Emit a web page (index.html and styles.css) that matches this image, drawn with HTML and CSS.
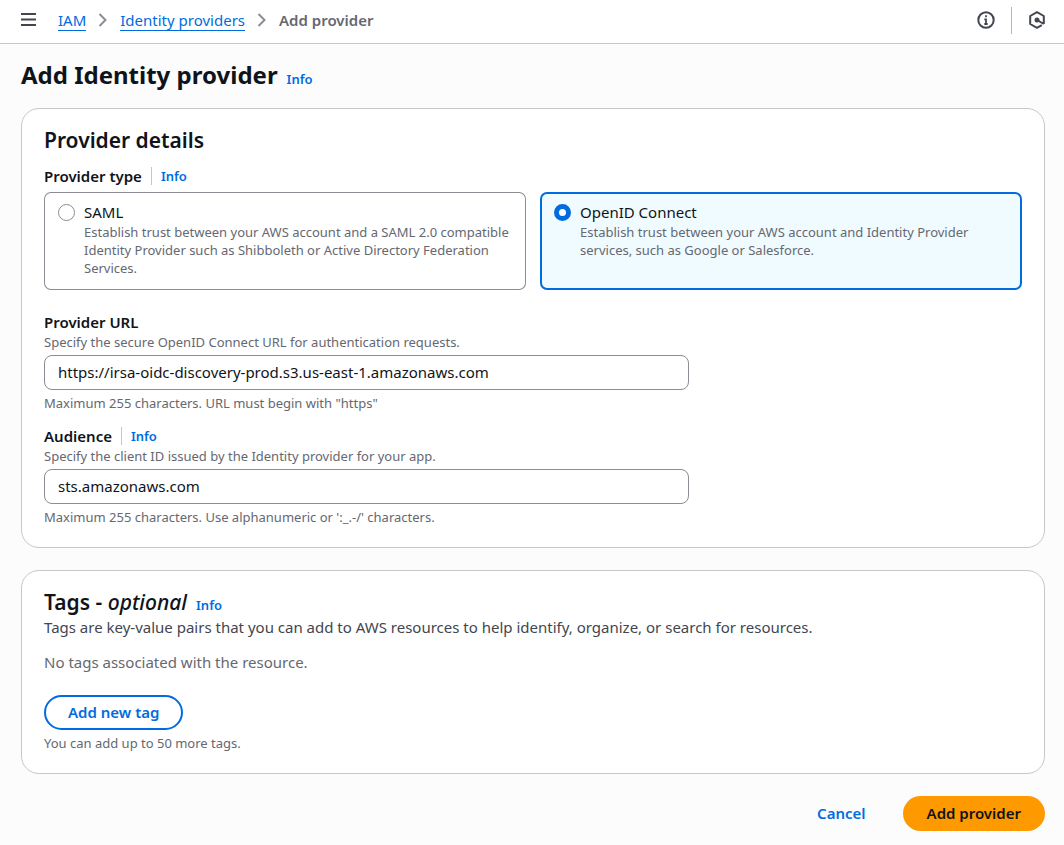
FILE: index.html
```html
<!DOCTYPE html>
<html lang="en">

<head>
    <meta charset="UTF-8">
    <meta name="viewport" content="width=device-width, initial-scale=1.0">
    <title>Add Identity provider | IAM</title>
    <link rel="stylesheet" href="styles.css">
</head>

<body>

    <header class="topbar">
        <button class="icon-button" type="button" aria-label="Open navigation">
            <svg width="18" height="18" viewBox="0 0 18 18" fill="none" stroke="#424650" stroke-width="2">
                <path d="M1 3h15M1 8.500h15M1 14h15" />
            </svg>
        </button>
        <nav class="breadcrumbs" aria-label="Breadcrumbs">
            <a class="breadcrumbs__link" href="#">IAM</a>
            <svg class="breadcrumbs__sep" width="10" height="16" viewBox="0 0 10 16" fill="none" stroke="#8c8c94" stroke-width="2">
                <path d="M1.500 2l6 6-6 6" />
            </svg>
            <a class="breadcrumbs__link" href="#">Identity providers</a>
            <svg class="breadcrumbs__sep" width="10" height="16" viewBox="0 0 10 16" fill="none" stroke="#8c8c94" stroke-width="2">
                <path d="M1.500 2l6 6-6 6" />
            </svg>
            <span class="breadcrumbs__current">Add provider</span>
        </nav>
        <div class="topbar__tools">
            <button class="icon-button" type="button" aria-label="Open help panel">
                <svg width="18" height="18" viewBox="0 0 18 18" fill="none" stroke="#424650" stroke-width="2">
                    <circle cx="9" cy="9" r="7.700" />
                    <path d="M9 4.300v2M7.300 8.300H9V13M7.300 13h3.400" stroke-width="1.800" />
                </svg>
            </button>
            <span class="topbar__divider"></span>
            <button class="icon-button" type="button" aria-label="Open tools">
                <svg width="18" height="18" viewBox="0 0 18 18" fill="none" stroke="#424650" stroke-width="2">
                    <path d="M15.800 13V5L9 1.200 2.200 5v8L9 16.800l4.800-2.700M9 9l6.800 4" stroke-linejoin="round" />
                    <circle cx="9" cy="9" r="2.500" fill="#424650" stroke="none" />
                </svg>
            </button>
        </div>
    </header>

    <main class="content">
        <div class="heading">
            <h1>Add Identity provider</h1>
            <a class="info" href="#">Info</a>
        </div>

        <form class="form">
            <section class="card">
                <h2>Provider details</h2>

                <div class="field-label field-label--first">
                    <span class="label" id="provider-type">Provider type</span>
                    <a class="info info--divided" href="#">Info</a>
                </div>
                <div class="tiles" role="radiogroup" aria-labelledby="provider-type">
                    <label class="tile">
                        <input class="tile__radio" type="radio" name="provider-type" value="saml">
                        <span class="tile__text">
                            <span class="tile__title">SAML</span>
                            <span class="hint">Establish trust between your AWS account and a SAML 2.0 compatible Identity Provider such as Shibboleth or Active Directory Federation Services.</span>
                        </span>
                    </label>
                    <label class="tile tile--selected">
                        <input class="tile__radio" type="radio" name="provider-type" value="oidc" checked>
                        <span class="tile__text">
                            <span class="tile__title">OpenID Connect</span>
                            <span class="hint">Establish trust between your AWS account and Identity Provider services, such as Google or Salesforce.</span>
                        </span>
                    </label>
                </div>

                <div class="field">
                    <div class="field-label">
                        <label class="label" for="provider-url">Provider URL</label>
                    </div>
                    <p class="hint">Specify the secure OpenID Connect URL for authentication requests.</p>
                    <input class="text-input" id="provider-url" type="text" value="https://irsa-oidc-discovery-prod.s3.us-east-1.amazonaws.com">
                    <p class="hint">Maximum 255 characters. URL must begin with "https"</p>
                </div>

                <div class="field">
                    <div class="field-label">
                        <label class="label" for="audience">Audience</label>
                        <a class="info info--divided" href="#">Info</a>
                    </div>
                    <p class="hint">Specify the client ID issued by the Identity provider for your app.</p>
                    <input class="text-input" id="audience" type="text" value="sts.amazonaws.com">
                    <p class="hint">Maximum 255 characters. Use alphanumeric or ':_.-/' characters.</p>
                </div>
            </section>

            <section class="card">
                <div class="heading">
                    <h2>Tags - <i>optional</i></h2>
                    <a class="info" href="#">Info</a>
                </div>
                <p class="tags__description">Tags are key-value pairs that you can add to AWS resources to help identify, organize, or search for resources.</p>
                <p class="tags__empty">No tags associated with the resource.</p>
                <button class="button button--normal" type="button">Add new tag</button>
                <p class="hint">You can add up to 50 more tags.</p>
            </section>

            <div class="actions">
                <button class="button button--link" type="button">Cancel</button>
                <button class="button button--primary" type="submit">Add provider</button>
            </div>
        </form>
    </main>

</body>

</html>
```
FILE: styles.css
```css
* {
    box-sizing: border-box;
}

body {
    margin: 0;
    background: #fcfcfd;
    color: #0f141a;
    font-family: "Noto Sans", "Open Sans", sans-serif;
    font-size: 15px;
    line-height: 22px;
}

h1,
h2,
p {
    margin: 0;
}

h1 {
    font-size: 24px;
    font-weight: 700;
    line-height: 30px;
}

h2 {
    font-size: 21px;
    font-weight: 600;
    line-height: 28px;
}

h2 i {
    font-weight: 500;
}

a {
    color: #006ce0;
}

.topbar {
    display: flex;
    align-items: center;
    height: 44px;
    padding: 0 18px 3px 20px;
    background: #fff;
    border-bottom: 1px solid #c6c6cd;
}

.topbar__tools {
    display: flex;
    align-items: center;
    gap: 16px;
    margin-left: auto;
}

.topbar__divider {
    width: 1px;
    height: 27px;
    background: #b4b4bb;
}

.icon-button {
    display: flex;
    padding: 0;
    border: 0;
    background: none;
    cursor: pointer;
}

.breadcrumbs {
    display: flex;
    align-items: center;
    gap: 12px;
    margin-left: 20px;
}

.breadcrumbs__link {
    line-height: 20px;
    text-decoration: none;
    border-bottom: 1px solid #006ce0;
}

.breadcrumbs__sep {
    flex: none;
}

.breadcrumbs__current {
    color: #656871;
    font-weight: 600;
}

.content {
    padding: 16px 19px 14px 21px;
}

.heading {
    display: flex;
    align-items: baseline;
    gap: 9px;
}

.info {
    font-size: 13px;
    line-height: 18px;
    font-weight: 600;
    text-decoration: none;
}

.info--divided {
    padding-left: 9px;
    border-left: 1px solid #c6c6cd;
}

.form {
    display: flex;
    flex-direction: column;
    gap: 22px;
    margin-top: 18px;
}

.card {
    padding: 17px 22px 21px;
    background: #fff;
    border: 1px solid #c6c6cd;
    border-radius: 18px;
}

.field-label {
    display: flex;
    align-items: center;
    gap: 9px;
}

.field-label--first {
    margin: 11px 0 5px;
}

.label {
    font-weight: 600;
}

.hint {
    color: #656871;
    font-size: 13px;
    line-height: 18px;
}

.tiles {
    display: grid;
    grid-template-columns: 1fr 1fr;
    gap: 14px;
    margin-bottom: 21px;
}

.tile {
    display: flex;
    gap: 9px;
    padding: 9px 14px 13px;
    border-radius: 7px;
    box-shadow: inset 0 0 0 1px #8c8c94;
}

.tile--selected {
    background: #f0fbff;
    box-shadow: inset 0 0 0 2px #006ce0;
}

.tile__radio {
    appearance: none;
    flex: none;
    width: 17px;
    height: 17px;
    margin: 3px 0 0;
    border: 1px solid #8c8c94;
    border-radius: 50%;
    background: #fff;
}

.tile__radio:checked {
    border: 5px solid #006ce0;
}

.tile__text {
    display: flex;
    flex-direction: column;
}

.field + .field {
    margin-top: 13px;
}

.text-input {
    display: block;
    width: 66%;
    height: 35px;
    margin: 4px 0;
    padding: 0 13px 2px;
    border: 1px solid #8c8c94;
    border-radius: 8px;
    background: #fff;
    color: #0f141a;
    font: inherit;
}

.tags__description {
    color: #424650;
}

.tags__empty {
    margin: 13px 0 22px;
    color: #656871;
}

.button {
    height: 35px;
    padding: 0 22px 2px;
    border: 2px solid transparent;
    border-radius: 18px;
    background: none;
    font: inherit;
    font-weight: 600;
    cursor: pointer;
}

.button--normal {
    display: block;
    margin-bottom: 4px;
    border-color: #006ce0;
    color: #006ce0;
}

.button--link {
    color: #006ce0;
}

.button--primary {
    background: #ff9900;
    color: #0f141a;
}

.actions {
    display: flex;
    justify-content: flex-end;
    gap: 13px;
}
```
